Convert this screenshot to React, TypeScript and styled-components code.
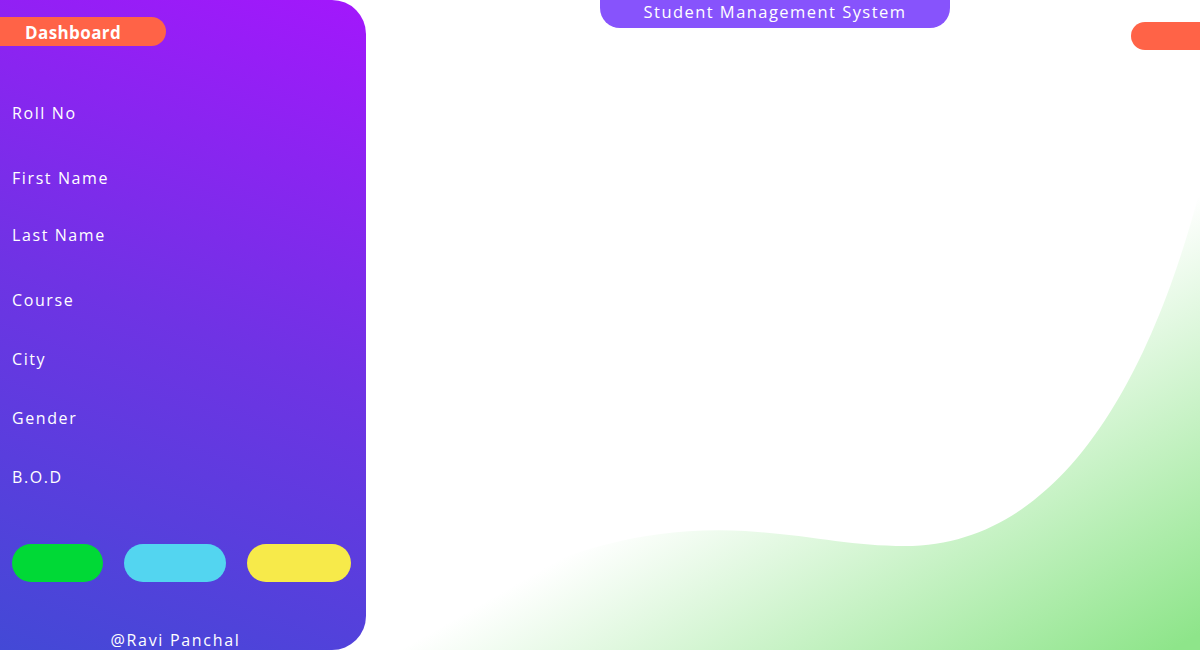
import React from "react";
import styled, { createGlobalStyle } from "styled-components";

const Global = createGlobalStyle`
  html, body { margin: 0; padding: 0; background: #ffffff; }
  body { font-family: "Open Sans", "Noto Sans", sans-serif; overflow: hidden; }
`;

const Page = styled.div`
  position: relative;
  width: 1200px;
  height: 650px;
  display: flex;
  overflow: hidden;
  background: #ffffff;
`;

const Sidebar = styled.aside`
  position: relative;
  z-index: 1;
  width: 366px;
  height: 650px;
  flex-shrink: 0;
  box-sizing: border-box;
  border-radius: 0 34px 34px 0;
  background: linear-gradient(20deg, #4349d6 0%, #6f33e4 50%, #a317fc 100%);
  display: flex;
  flex-direction: column;
  padding-top: 17px;
  color: #ffffff;
`;

const DashPill = styled.div`
  width: 166px;
  height: 29px;
  box-sizing: border-box;
  background: #ff6347;
  border-radius: 0 15px 15px 0;
  padding-left: 25px;
  padding-top: 2px;
  display: flex;
  align-items: center;
  font-weight: 700;
  font-size: 17px;
  letter-spacing: 0.4px;
  color: #ffffff;
`;

const Fields = styled.div`
  display: flex;
  flex-direction: column;
  padding-left: 12px;
  margin-top: 55px;
`;

const Label = styled.div<{ $gap: number }>`
  height: 24px;
  line-height: 24px;
  margin-top: ${(p) => p.$gap}px;
  font-size: 16px;
  letter-spacing: 1.6px;
  color: #ffffff;
`;

const Buttons = styled.div`
  display: flex;
  padding-left: 12px;
  margin-top: 55px;
  gap: 21px;
`;

const Btn = styled.div<{ $w: number; $bg: string }>`
  width: ${(p) => p.$w}px;
  height: 38px;
  border-radius: 19px;
  background: ${(p) => p.$bg};
`;

const Footer = styled.div`
  margin-top: auto;
  text-align: center;
  font-size: 16px;
  letter-spacing: 1.7px;
  padding-right: 15px;
  line-height: 20px;
  margin-bottom: 0px;
`;

const Main = styled.main`
  position: relative;
  flex: 1;
  display: flex;
  justify-content: center;
  align-items: flex-start;
`;

const TitlePill = styled.div`
  margin-right: 16px;
  width: 350px;
  height: 28px;
  background: #8753fc;
  border-radius: 0 0 20px 20px;
  color: #ffffff;
  font-size: 16.5px;
  letter-spacing: 1.45px;
  display: flex;
  align-items: center;
  justify-content: center;
  line-height: 1;
  padding-bottom: 4px;
  box-sizing: border-box;
`;

const CornerPill = styled.div`
  position: absolute;
  top: 22px;
  right: 0;
  width: 69px;
  height: 28px;
  background: #ff6347;
  border-radius: 14px 0 0 14px;
`;

const Wave = styled.svg`
  position: absolute;
  left: 0;
  top: 0;
  width: 1200px;
  height: 650px;
  pointer-events: none;
`;

const fields: [string, number][] = [
  ["Roll No", 0],
  ["First Name", 41],
  ["Last Name", 33],
  ["Course", 41],
  ["City", 35],
  ["Gender", 35],
  ["B.O.D", 35],
];

export default function App() {
  return (
    <>
      <Global />
      <Page>
        <Wave viewBox="0 0 1200 650">
          <defs>
            <linearGradient id="wg" x1="795" y1="425" x2="984" y2="757" gradientUnits="userSpaceOnUse">
              <stop offset="0" stopColor="#8ee58a" stopOpacity="0" />
              <stop offset="1" stopColor="#8ee58a" stopOpacity="1" />
            </linearGradient>
          </defs>
          <path
            d="M385,650 C470,600 580,522 745,531 C810,535 850,546 905,546 C1060,546 1150,380 1200,190 L1200,650 Z"
            fill="url(#wg)"
          />
        </Wave>
        <Sidebar>
          <DashPill>Dashboard</DashPill>
          <Fields>
            {fields.map(([t, g]) => (
              <Label key={t} $gap={g}>
                {t}
              </Label>
            ))}
          </Fields>
          <Buttons>
            <Btn $w={91} $bg="#00d936" />
            <Btn $w={102} $bg="#53d5f0" />
            <Btn $w={104} $bg="#f7ea4a" />
          </Buttons>
          <Footer>@Ravi Panchal</Footer>
        </Sidebar>
        <Main>
          <TitlePill>Student Management System</TitlePill>
          <CornerPill />
        </Main>
      </Page>
    </>
  );
}
